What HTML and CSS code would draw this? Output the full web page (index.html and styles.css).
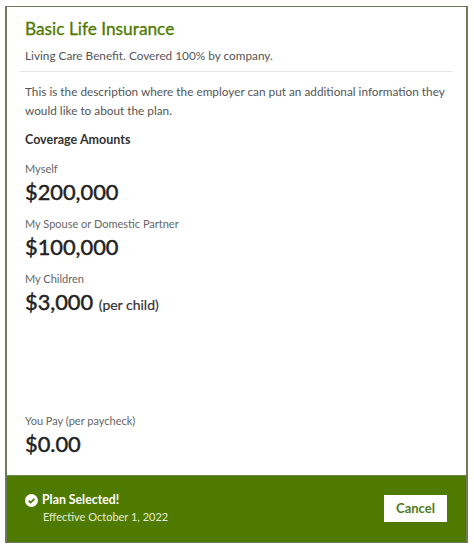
FILE: index.html
```html
<!DOCTYPE html>
<html lang="en">
<head>
  <meta charset="UTF-8">
  <title>Basic Life Insurance</title>
  <link rel="stylesheet" href="styles.css">
</head>
<body>
  <div class="plan-card">
    <div class="plan-body">
      <h1 class="plan-title">Basic Life Insurance</h1>
      <p class="plan-subtitle">Living Care Benefit. Covered 100% by company.</p>
      <hr class="divider">
      <p class="plan-desc">This is the description where the employer can put an additional information they would like to about the plan.</p>
      <h2 class="section-title">Coverage Amounts</h2>

      <div class="amount-row">
        <div class="amount-label">Myself</div>
        <div class="amount">$200,000</div>
      </div>
      <div class="amount-row">
        <div class="amount-label">My Spouse or Domestic Partner</div>
        <div class="amount">$100,000</div>
      </div>
      <div class="amount-row">
        <div class="amount-label">My Children</div>
        <div class="amount">$3,000 <span class="amount-note">(per child)</span></div>
      </div>

      <div class="amount-row pay-row">
        <div class="amount-label">You Pay (per paycheck)</div>
        <div class="amount">$0.00</div>
      </div>
    </div>

    <footer class="plan-footer">
      <div class="status">
        <div class="status-title">
          <svg class="check-icon" viewBox="0 0 14 14" width="13" height="13" aria-hidden="true">
            <circle cx="7" cy="7" r="7" fill="#fff"/>
            <path d="M3.9 7.2 L6 9.3 L10.1 5.2" fill="none" stroke="#4f7a00" stroke-width="1.8"/>
          </svg>
          Plan Selected!
        </div>
        <div class="status-date">Effective October 1, 2022</div>
      </div>
      <button class="cancel-btn">Cancel</button>
    </footer>
  </div>
</body>
</html>
```

FILE: styles.css
```css
/* Reset and basic styles */
* {
  margin: 0;
  padding: 0;
  box-sizing: border-box;
}

body {
  background: #fff;
  font-family: Lato, "Open Sans", sans-serif;
  color: #222;
  padding: 6px 6px 4px 5px;
}

.plan-card {
  display: flex;
  flex-direction: column;
  height: 537px;
  border: 1px solid #6f7a5c;
  border-left-width: 2px;
  border-right-width: 2px;
}

.plan-body {
  flex: 1;
  display: flex;
  flex-direction: column;
  padding: 11px 13px 0 18px;
}

.plan-title {
  font-size: 17.3px;
  font-weight: 400;
  -webkit-text-stroke: 0.3px #4f7a00;
  line-height: 22px;
  color: #4f7a00;
}

.plan-subtitle {
  margin-top: 8px;
  font-size: 11.8px;
  line-height: 16px;
  color: #555;
}

.divider {
  border: 0;
  border-top: 1px solid #e6e6e6;
  margin: 7px 0 10px -6px;
}

.plan-desc {
  font-size: 11.8px;
  line-height: 19px;
  color: #555;
}

.section-title {
  margin-top: 12px;
  font-size: 12.5px;
  font-weight: 700;
  line-height: 16px;
  color: #333;
}

.amount-row {
  margin-top: 14px;
}

.amount-row + .amount-row {
  margin-top: 11px;
}

.amount-label {
  font-size: 11px;
  line-height: 14px;
  color: #666;
}

.amount {
  margin-top: 2px;
  font-size: 21.8px;
  font-weight: 400;
  -webkit-text-stroke: 0.45px #222;
  line-height: 28px;
  color: #222;
}

.amount-note {
  font-size: 14px;
  font-weight: 400;
  -webkit-text-stroke: 0.2px #333;
  color: #333;
}

.amount-row.pay-row {
  margin-top: auto;
  margin-bottom: 17px;
}

/* Green footer strip */
.plan-footer {
  display: flex;
  justify-content: space-between;
  align-items: center;
  height: 67px;
  padding: 0 19px 2px 18px;
  background: #4f7a00;
  border-top: 1px solid #6f8a4c;
  color: #fff;
}

.status-title {
  display: flex;
  align-items: center;
  gap: 4px;
  font-size: 12.3px;
  font-weight: 700;
  line-height: 16px;
}

.status-date {
  margin-top: 2px;
  margin-left: 18px;
  font-size: 11px;
  line-height: 14px;
  color: #e4edd4;
}

.cancel-btn {
  width: 63px;
  height: 27px;
  background: #fff;
  border: 0;
  font-family: inherit;
  font-size: 13px;
  font-weight: 700;
  color: #4f7a1e;
}
```
